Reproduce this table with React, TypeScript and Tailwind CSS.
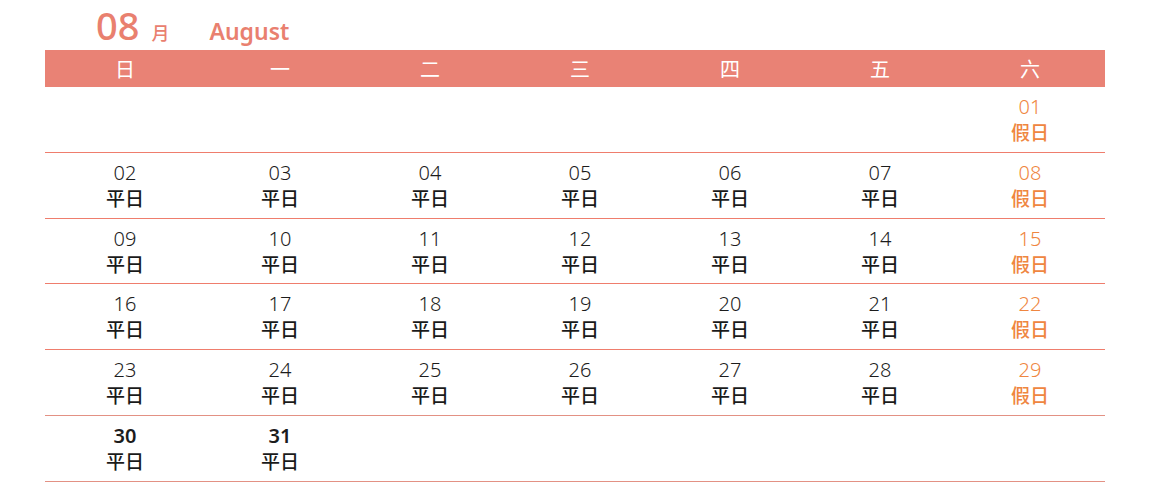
import React from "react";

type Day = { d: string; holiday?: boolean; bold?: boolean } | null;

const weekdays = ["日", "一", "二", "三", "四", "五", "六"];

const weeks: Day[][] = [
  [null, null, null, null, null, null, { d: "01", holiday: true }],
  [{ d: "02" }, { d: "03" }, { d: "04" }, { d: "05" }, { d: "06" }, { d: "07" }, { d: "08", holiday: true }],
  [{ d: "09" }, { d: "10" }, { d: "11" }, { d: "12" }, { d: "13" }, { d: "14" }, { d: "15", holiday: true }],
  [{ d: "16" }, { d: "17" }, { d: "18" }, { d: "19" }, { d: "20" }, { d: "21" }, { d: "22", holiday: true }],
  [{ d: "23" }, { d: "24" }, { d: "25" }, { d: "26" }, { d: "27" }, { d: "28" }, { d: "29", holiday: true }],
  [{ d: "30", bold: true }, { d: "31", bold: true }, null, null, null, null, null],
];

const cols = "grid grid-cols-[160px_repeat(6,150px)]";

const App = () => {
  return (
    <div
      className="w-[1151px] h-[483px] bg-white pl-[45px] overflow-hidden"
      style={{ fontFamily: '"Noto Sans", "Noto Sans CJK SC", sans-serif' }}
    >
      {/* Title */}
      <div className="h-[50px] flex items-baseline pl-[51px] pt-[4px] text-[#e9806f]">
        <span className="text-[38px] leading-[42px] font-medium">08</span>
        <span className="text-[18px] ml-[12px] font-medium" style={{ fontFamily: '"Noto Sans CJK SC", sans-serif' }}>月</span>
        <span className="text-[23px] ml-[40px] font-semibold">August</span>
      </div>

      {/* Weekday bar */}
      <div className={`${cols} w-[1060px] h-[37px] bg-[#e98275] items-center`}>
        {weekdays.map((w) => (
          <div
            key={w}
            className="text-center text-white text-[20px] leading-[37px]"
            style={{ fontFamily: '"Noto Sans CJK SC", sans-serif' }}
          >
            {w}
          </div>
        ))}
      </div>

      {/* Day rows */}
      {weeks.map((week, i) => (
        <div
          key={i}
          className={`${cols} w-[1060px] h-[65.8px] border-b ${i >= 4 ? "border-[#e39184]" : "border-[#ef7d6d]"}`}
        >
          {week.map((day, j) => (
            <div key={j} className="flex flex-col items-center pt-[8px]">
              {day && (
                <>
                  <span
                    className={`text-[20px] leading-[24px] ${day.bold ? "font-semibold" : "font-light"} ${
                      day.holiday ? "text-[#ef8640]" : "text-[#1c1c1c]"
                    }`}
                  >
                    {day.d}
                  </span>
                  <span
                    className={`text-[19px] leading-[25px] font-medium ${day.holiday ? "text-[#ef8640]" : "text-[#1a1a1a]"}`}
                    style={{ fontFamily: '"Noto Sans CJK TC", sans-serif' }}
                  >
                    {day.holiday ? "假日" : "平日"}
                  </span>
                </>
              )}
            </div>
          ))}
        </div>
      ))}
    </div>
  );
};

export default App;
